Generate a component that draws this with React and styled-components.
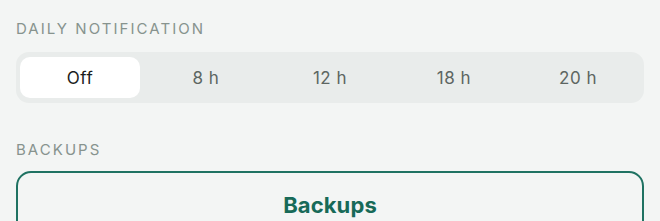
import React, { useState } from 'react';
import styled, { createGlobalStyle } from 'styled-components';

const Global = createGlobalStyle`
  html, body {
    margin: 0;
    padding: 0;
    background: #f3f5f4;
  }
  body {
    font-family: Inter, "Noto Sans", sans-serif;
    -webkit-font-smoothing: antialiased;
  }
`;

const Page = styled.div`
  display: flex;
  flex-direction: column;
  padding: 20px 16px 0 16px;
  height: 221px;
  box-sizing: border-box;
  overflow: hidden;
  & > * {
    flex-shrink: 0;
  }
`;

const Label = styled.div`
  font-size: 15px;
  letter-spacing: 2.05px;
  color: #87938e;
  line-height: 18px;
  margin-bottom: ${(p) => p.gap || 14}px;
  padding-top: ${(p) => p.top || 0}px;
`;

const Segmented = styled.div`
  display: grid;
  grid-template-columns: repeat(5, 1fr);
  background: #e9eceb;
  border-radius: 13px;
  padding: 5px 4px;
  height: 51px;
  box-sizing: border-box;
`;

const Segment = styled.button`
  border: none;
  outline: none;
  margin: 0 ${(p) => (p.active ? 4 : 0)}px 0 0;
  background: ${(p) => (p.active ? '#ffffff' : 'transparent')};
  border-radius: 10px;
  font-family: Inter, "Noto Sans", sans-serif;
  font-size: 17px;
  letter-spacing: 0.5px;
  color: ${(p) => (p.active ? '#1c1c1c' : '#5d6662')};
  cursor: pointer;
  padding: 0;
`;

const Card = styled.div`
  border: 2px solid #1f7262;
  border-radius: 15px;
  height: 120px;
  display: flex;
  justify-content: center;
  padding-top: 19px;
  box-sizing: border-box;
`;

const CardTitle = styled.div`
  font-size: 22px;
  font-weight: 700;
  color: #176a58;
  letter-spacing: 0.1px;
`;

const options = ['Off', '8 h', '12 h', '18 h', '20 h'];

export default function App() {
  const [sel, setSel] = useState('Off');
  return (
    <>
      <Global />
      <Page>
        <Label>DAILY NOTIFICATION</Label>
        <Segmented>
          {options.map((o) => (
            <Segment key={o} active={sel === o} onClick={() => setSel(o)}>
              {o}
            </Segment>
          ))}
        </Segmented>
        <Label top={38} gap={12}>BACKUPS</Label>
        <Card>
          <CardTitle>Backups</CardTitle>
        </Card>
      </Page>
    </>
  );
}
